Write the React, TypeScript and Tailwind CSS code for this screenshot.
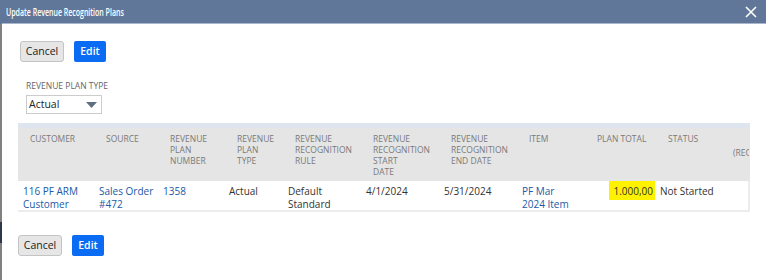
import React from "react";

const cols = [76, 64, 66, 59, 78, 78, 78, 73, 65, 70, 24];

const headers: { lines: string[]; pl: number; pt?: number }[] = [
  { lines: ["CUSTOMER"], pl: 12 },
  { lines: ["SOURCE"], pl: 12 },
  { lines: ["REVENUE", "PLAN", "NUMBER"], pl: 12 },
  { lines: ["REVENUE", "PLAN", "TYPE"], pl: 13 },
  { lines: ["REVENUE", "RECOGNITION", "RULE"], pl: 12 },
  { lines: ["REVENUE", "RECOGNITION", "START", "DATE"], pl: 12 },
  { lines: ["REVENUE", "RECOGNITION", "END DATE"], pl: 12 },
  { lines: ["ITEM"], pl: 12 },
  { lines: ["PLAN TOTAL"], pl: 7 },
  { lines: ["STATUS"], pl: 13 },
  { lines: ["(REC"], pl: 8, pt: 19 },
];

function Buttons({ ml }: { ml: string }) {
  return (
    <div className={`flex gap-[10px] ${ml}`}>
      <button className="h-[21px] w-[44px] rounded-[3px] border border-[#c4c4c4] bg-[#e6e6e6] text-[10.5px] text-[#222]">
        Cancel
      </button>
      <button className="h-[21px] w-[32px] rounded-[2px] bg-[#0a6cf2] text-[10.5px] font-semibold text-white">
        Edit
      </button>
    </div>
  );
}

export default function App() {
  const font = { fontFamily: '"Open Sans", "Liberation Sans", sans-serif' };
  return (
    <div className="flex h-[280px] w-[766px] overflow-hidden bg-white" style={font}>
      <div className="flex w-[2px] flex-col">
        <div className="h-[24px] bg-[#607799]" />
        <div className="h-[198px] bg-[#808080]" />
        <div className="h-[21px] bg-[#2c3848]" />
        <div className="flex-1 bg-[#808080]" />
      </div>
      <div className="flex flex-1 flex-col">
        <div className="flex h-[24px] items-center justify-between border-b border-[#a8b6cb] bg-[#607799] pl-[4px] pr-[8px]">
          <div className="origin-left scale-x-[0.61] whitespace-nowrap text-[11.5px] font-semibold text-white">
            Update Revenue Recognition Plans
          </div>
          <svg width="12" height="12" viewBox="0 0 12 12" className="mr-[1px]">
            <path d="M1 1 L11 11 M11 1 L1 11" stroke="white" strokeWidth="1.6" fill="none" />
          </svg>
        </div>
        <div className="mt-[17px]">
          <Buttons ml="ml-[18px]" />
        </div>
        <div className="ml-[24px] mt-[18px] text-[8.5px] leading-[11px] text-[#666]">REVENUE PLAN TYPE</div>
        <div className="ml-[24px] mt-[4px] flex h-[19px] w-[76px] items-center justify-between border border-[#cccccc] pl-[2px] pr-[4px] text-[10.5px] text-[#222]">
          <span>Actual</span>
          <svg width="11" height="6" viewBox="0 0 11 6">
            <path d="M0 0 L11 0 L5.5 6 Z" fill="#5f6f82" />
          </svg>
        </div>
        <div className="ml-[16px] mt-[9px] w-[732px]">
          <div className="h-[5px] bg-[#dfe5ee]" />
          <div className="flex h-[53px] bg-[#e5e5e5]">
            {headers.map((h, i) => (
              <div
                key={i}
                className="shrink-0 overflow-hidden whitespace-nowrap text-[8.5px] leading-[11px] text-[#7a7a7a]"
                style={{ width: cols[i], paddingLeft: h.pl, paddingTop: h.pt ?? 5 }}
              >
                {h.lines.map((l, j) => (
                  <div key={j}>{l}</div>
                ))}
              </div>
            ))}
          </div>
          <div className="flex h-[31px] border-b-2 border-r-2 border-[#ececec] text-[10px] leading-[13px] text-[#333]">
            <div className="shrink-0 pl-[5px] pt-[4px] text-[#2159a6]" style={{ width: cols[0] }}>
              <div>116 PF ARM</div>
              <div>Customer</div>
            </div>
            <div className="shrink-0 pl-[5px] pt-[4px] text-[#2159a6]" style={{ width: cols[1] }}>
              <div>Sales Order</div>
              <div>#472</div>
            </div>
            <div className="shrink-0 pl-[5px] pt-[4px] text-[#2159a6]" style={{ width: cols[2] }}>
              1358
            </div>
            <div className="shrink-0 pl-[5px] pt-[4px]" style={{ width: cols[3] }}>
              Actual
            </div>
            <div className="shrink-0 pl-[5px] pt-[4px]" style={{ width: cols[4] }}>
              <div>Default</div>
              <div>Standard</div>
            </div>
            <div className="shrink-0 pl-[5px] pt-[4px]" style={{ width: cols[5] }}>
              4/1/2024
            </div>
            <div className="shrink-0 pl-[5px] pt-[4px]" style={{ width: cols[6] }}>
              5/31/2024
            </div>
            <div className="shrink-0 pl-[5px] pt-[4px] text-[#2159a6]" style={{ width: cols[7] }}>
              <div>PF Mar</div>
              <div>2024 Item</div>
            </div>
            <div className="flex shrink-0 justify-end" style={{ width: cols[8] }}>
              <div className="h-[19px] bg-[#fff200] pl-[4px] pr-[2px] pt-[4px]">1.000,00</div>
            </div>
            <div className="shrink-0 pl-[5px] pt-[4px]" style={{ width: cols[9] }}>
              Not Started
            </div>
            <div className="flex-1" />
          </div>
        </div>
        <div className="mt-[23px]">
          <Buttons ml="ml-[16px]" />
        </div>
      </div>
    </div>
  );
}
